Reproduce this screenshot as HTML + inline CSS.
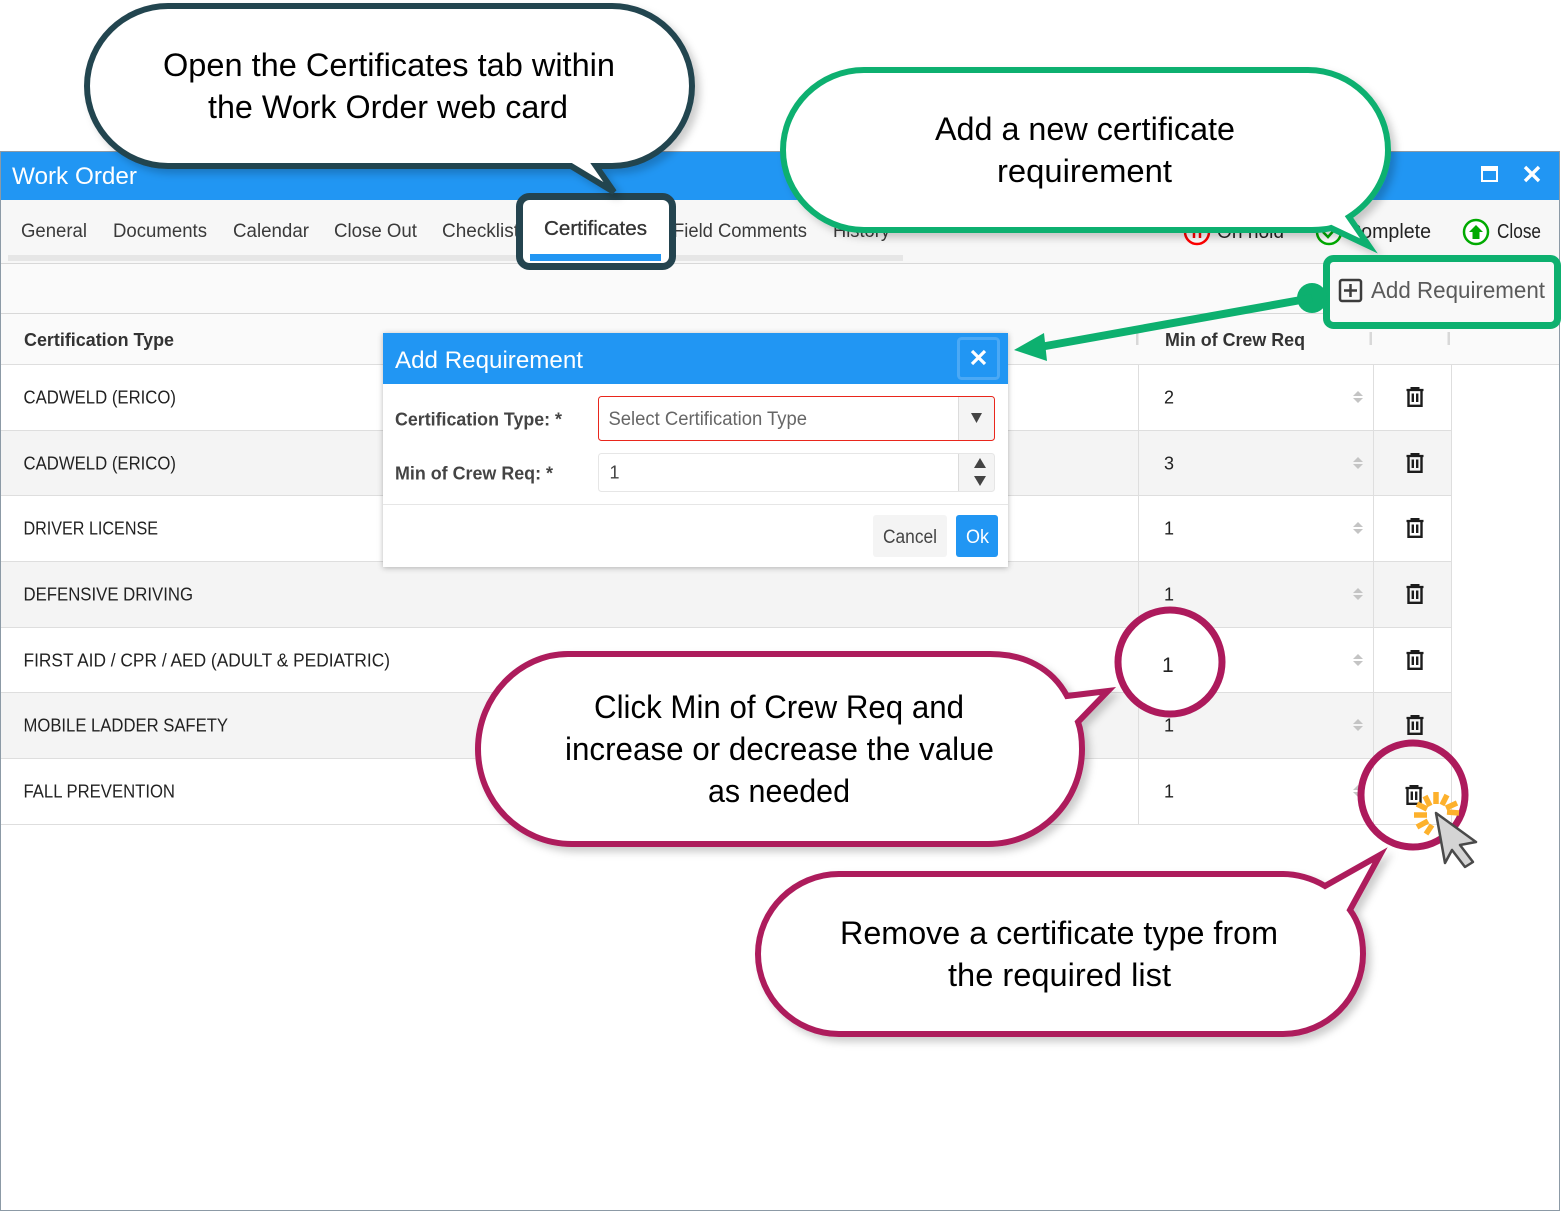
<!DOCTYPE html>
<html lang="en"><head><meta charset="utf-8"><title>Work Order</title>
<style>
html,body{margin:0;padding:0;background:#fff}
svg{display:block}
text{font-family:"Liberation Sans",sans-serif;fill:#333}
.cap{font-size:32px;fill:#000}
.tab{font-size:19px;fill:#3a3a3a}
.row{font-size:18px;fill:#222}
.h{font-size:18px;font-weight:bold;fill:#333}
.l{font-size:18px;font-weight:bold;fill:#444}
</style></head><body>
<svg width="1561" height="1211" viewBox="0 0 1561 1211" xmlns="http://www.w3.org/2000/svg">
<defs>
<filter id="sh" x="-10%" y="-10%" width="125%" height="130%"><feDropShadow dx="5" dy="5" stdDeviation="4" flood-color="#000" flood-opacity="0.2"/></filter>
<filter id="ms" x="-5%" y="-5%" width="110%" height="110%"><feDropShadow dx="0" dy="1" stdDeviation="3" flood-color="#000" flood-opacity="0.28"/></filter>
<g id="tr" fill="none" stroke="#1c1c1c">
<path d="M-8.500-7H8.500" stroke-width="2.200"/>
<path d="M-3.500-7V-9H3.500V-7" stroke-width="2"/>
<path d="M-6.500-7V8.800H6.500V-7" stroke-width="2.400"/>
<path d="M-2.200-3.500V5M2.200-3.500V5" stroke-width="2.400"/>
</g>
<g id="sp" fill="#c4c4c4"><path d="M-5-1L0-6L5-1Z"/><path d="M-5 1L0 6L5 1Z"/></g>
</defs>

<rect x="0.500" y="151.500" width="1559" height="1059" fill="#fff" stroke="#8c9aa6"/>
<rect x="1" y="152" width="1558" height="48" fill="#2196f3"/>
<text x="12" y="184" font-size="24" style="fill:#fff" textLength="125" lengthAdjust="spacingAndGlyphs">Work Order</text>
<rect x="1482" y="167" width="15" height="14" fill="none" stroke="#fff" stroke-width="2"/><rect x="1482" y="167" width="15" height="4" fill="#fff"/>
<path d="M1525 167L1539 181M1539 167L1525 181" stroke="#fff" stroke-width="3.400"/>

<rect x="1" y="200" width="1558" height="63" fill="#f7f7f7"/>
<rect x="8" y="255" width="895" height="6" fill="#e6e6e6"/>
<rect x="1" y="263" width="1558" height="1" fill="#d8d8d8"/>
<rect x="1" y="264" width="1558" height="49" fill="#fafafa"/>
<rect x="1" y="313" width="1558" height="1" fill="#d8d8d8"/>
<rect x="1" y="314" width="1558" height="50" fill="#fafafa"/>

<text class="tab" x="21" y="237" textLength="66" lengthAdjust="spacingAndGlyphs">General</text>
<text class="tab" x="113" y="237" textLength="94" lengthAdjust="spacingAndGlyphs">Documents</text>
<text class="tab" x="233" y="237" textLength="76" lengthAdjust="spacingAndGlyphs">Calendar</text>
<text class="tab" x="334" y="237" textLength="83" lengthAdjust="spacingAndGlyphs">Close Out</text>
<text class="tab" x="442" y="237" textLength="77" lengthAdjust="spacingAndGlyphs">Checklist</text>
<text class="tab" x="673" y="237" textLength="134" lengthAdjust="spacingAndGlyphs">Field Comments</text>
<text class="tab" x="833" y="237" textLength="57" lengthAdjust="spacingAndGlyphs">History</text>

<circle cx="1197" cy="232" r="12" fill="#fff" stroke="#f00" stroke-width="2.500"/><path d="M1194 226V238M1200 226V238" stroke="#f00" stroke-width="2.500"/>
<text x="1217" y="238" font-size="20" style="fill:#222" textLength="67" lengthAdjust="spacingAndGlyphs">On hold</text>
<circle cx="1329" cy="232" r="12" fill="#fff" stroke="#0a0" stroke-width="2.500"/><path d="M1323 232L1328 237L1336 228" fill="none" stroke="#0a0" stroke-width="2.500"/>
<text x="1347" y="238" font-size="20" style="fill:#222" textLength="84" lengthAdjust="spacingAndGlyphs">Complete</text>
<circle cx="1476" cy="232" r="12" fill="#fff" stroke="#0a0" stroke-width="2.500"/><path d="M1476 225L1483 232H1479.500V239H1472.500V232H1469Z" fill="#0a0"/>
<text x="1497" y="238" font-size="20" style="fill:#222" textLength="44" lengthAdjust="spacingAndGlyphs">Close</text>

<text class="h" x="24" y="346" textLength="150" lengthAdjust="spacingAndGlyphs">Certification Type</text>
<text class="h" x="1165" y="346" textLength="140" lengthAdjust="spacingAndGlyphs">Min of Crew Req</text>
<rect x="1136" y="332" width="2.500" height="13" fill="#d8d8d8"/><rect x="1369.500" y="332" width="2.500" height="13" fill="#d8d8d8"/><rect x="1447.500" y="332" width="2.500" height="13" fill="#d8d8d8"/>

<rect x="1" y="364" width="1450" height="461" fill="#fff"/>
<rect x="1" y="431" width="1450" height="65" fill="#f4f4f4"/>
<rect x="1" y="562" width="1450" height="66" fill="#f4f4f4"/>
<rect x="1" y="693" width="1450" height="66" fill="#f4f4f4"/>
<g fill="#dedede">
<rect x="1" y="364" width="1558" height="1"/><rect x="1" y="430" width="1450" height="1"/><rect x="1" y="495" width="1450" height="1"/><rect x="1" y="561" width="1450" height="1"/><rect x="1" y="627" width="1450" height="1"/><rect x="1" y="692" width="1450" height="1"/><rect x="1" y="758" width="1450" height="1"/><rect x="1" y="824" width="1450" height="1"/>
<rect x="1138" y="365" width="1" height="460"/><rect x="1373" y="365" width="1" height="460"/><rect x="1451" y="365" width="1" height="460"/>
</g>

<text class="row" x="23.500" y="403.500" textLength="152.500" lengthAdjust="spacingAndGlyphs">CADWELD (ERICO)</text>
<text class="row" x="23.500" y="469.500" textLength="152.500" lengthAdjust="spacingAndGlyphs">CADWELD (ERICO)</text>
<text class="row" x="23.500" y="534.500" textLength="134.500" lengthAdjust="spacingAndGlyphs">DRIVER LICENSE</text>
<text class="row" x="23.500" y="600.500" textLength="169.500" lengthAdjust="spacingAndGlyphs">DEFENSIVE DRIVING</text>
<text class="row" x="23.500" y="666.500" textLength="366.500" lengthAdjust="spacingAndGlyphs">FIRST AID / CPR / AED (ADULT &amp; PEDIATRIC)</text>
<text class="row" x="23.500" y="731.500" textLength="204.500" lengthAdjust="spacingAndGlyphs">MOBILE LADDER SAFETY</text>
<text class="row" x="23.500" y="797.500" textLength="151.500" lengthAdjust="spacingAndGlyphs">FALL PREVENTION</text>
<text class="row" x="1164" y="403.500">2</text><text class="row" x="1164" y="469.500">3</text><text class="row" x="1164" y="534.500">1</text><text class="row" x="1164" y="600.500">1</text><text class="row" x="1164" y="731.500">1</text><text class="row" x="1164" y="797.500">1</text>
<use href="#sp" transform="translate(1358 397)"/><use href="#sp" transform="translate(1358 463)"/><use href="#sp" transform="translate(1358 528)"/><use href="#sp" transform="translate(1358 594)"/><use href="#sp" transform="translate(1358 660)"/><use href="#sp" transform="translate(1358 725)"/><use href="#sp" transform="translate(1358 791)"/>
<use href="#tr" transform="translate(1415 397)"/><use href="#tr" transform="translate(1415 463)"/><use href="#tr" transform="translate(1415 528)"/><use href="#tr" transform="translate(1415 594)"/><use href="#tr" transform="translate(1415 660)"/><use href="#tr" transform="translate(1415 725)"/><use href="#tr" transform="translate(1414 795)"/>

<rect x="383" y="333" width="625" height="234" fill="#fff" filter="url(#ms)"/>
<rect x="383" y="333" width="625" height="51" fill="#2196f3"/>
<text x="395" y="368" font-size="24" style="fill:#fff" textLength="188" lengthAdjust="spacingAndGlyphs">Add Requirement</text>
<rect x="958.500" y="338.500" width="40" height="40" rx="3" fill="none" stroke="#4ba9f5" stroke-width="3"/>
<path d="M972 351L985 364M985 351L972 364" stroke="#fff" stroke-width="3.200"/>
<text class="l" x="395" y="425.500" textLength="167" lengthAdjust="spacingAndGlyphs">Certification Type: *</text>
<text class="l" x="395" y="479.500" textLength="158" lengthAdjust="spacingAndGlyphs">Min of Crew Req: *</text>
<rect x="958" y="397" width="36" height="43" fill="#f4f4f4"/>
<rect x="958" y="397" width="1" height="43" fill="#dcdcdc"/>
<rect x="598.500" y="396.500" width="396" height="44" rx="3" fill="none" stroke="#e9261c"/>
<text x="608.500" y="425" font-size="19" style="fill:#666" textLength="198.500" lengthAdjust="spacingAndGlyphs">Select Certification Type</text>
<path d="M971 413H982L976.500 423Z" fill="#444"/>
<rect x="958" y="454" width="36" height="37" fill="#f4f4f4"/>
<rect x="958" y="454" width="1" height="37" fill="#dcdcdc"/>
<rect x="598.500" y="453.500" width="396" height="38" rx="3" fill="none" stroke="#e6e6e6"/>
<text x="609.500" y="478.500" font-size="18" style="fill:#444">1</text>
<path d="M974 468H986L980 458Z" fill="#444"/><path d="M974 476H986L980 486Z" fill="#444"/>
<rect x="383" y="504" width="625" height="1" fill="#e6e6e6"/>
<rect x="873" y="515" width="74" height="42" rx="3" fill="#f4f4f4"/>
<text x="883" y="543" font-size="19" style="fill:#444" textLength="54" lengthAdjust="spacingAndGlyphs">Cancel</text>
<rect x="956" y="515" width="42" height="42" rx="3" fill="#2196f3"/>
<text x="966" y="543" font-size="19" style="fill:#fff" textLength="23" lengthAdjust="spacingAndGlyphs">Ok</text>

<rect x="519.500" y="196.500" width="153" height="70" rx="10" fill="#fff" stroke="#24444f" stroke-width="7"/>
<rect x="530" y="254" width="131" height="7" fill="#2196f3"/>
<text x="544" y="235" font-size="20" style="fill:#333;stroke:#333;stroke-width:.3" textLength="103" lengthAdjust="spacingAndGlyphs">Certificates</text>

<path d="M168 6H612C656 6 692 42 692 86C692 130 656 166 612 166H596L614 192L571 166H168C124 166 87 130 87 86C87 42 124 6 168 6Z" fill="#fff" stroke="#24444f" stroke-width="6" filter="url(#sh)"/>
<text class="cap" x="163" y="76" textLength="452" lengthAdjust="spacingAndGlyphs">Open the Certificates tab within</text>
<text class="cap" x="208" y="118" textLength="360" lengthAdjust="spacingAndGlyphs">the Work Order web card</text>

<path d="M864 70H1308C1352 70 1388 106 1388 150C1388 178 1372 202 1349 217L1369 246L1331 228C1324 230 1316 230 1308 230H864C820 230 783 194 783 150C783 106 820 70 864 70Z" fill="#fff" stroke="#0db06f" stroke-width="6" filter="url(#sh)"/>
<text class="cap" x="935" y="140" textLength="300" lengthAdjust="spacingAndGlyphs">Add a new certificate</text>
<text class="cap" x="997" y="182" textLength="175" lengthAdjust="spacingAndGlyphs">requirement</text>

<rect x="1326.500" y="258.500" width="231" height="67" rx="7" fill="#f9f9f9" stroke="#0db06f" stroke-width="7"/>
<rect x="1340" y="280" width="21" height="21" rx="2" fill="none" stroke="#3c3c3c" stroke-width="2.500"/>
<path d="M1344 290.500H1357M1350.500 284V297" stroke="#3c3c3c" stroke-width="2.500"/>
<text x="1371" y="298" font-size="23" style="fill:#5a5a5a" textLength="174" lengthAdjust="spacingAndGlyphs">Add Requirement</text>
<circle cx="1312" cy="298" r="15" fill="#0db06f"/>
<path d="M1312 298L1040 347" stroke="#0db06f" stroke-width="8"/>
<path d="M1014 350L1044 333L1047 361Z" fill="#0db06f"/>

<circle cx="1170" cy="662" r="52" fill="#fff" stroke="#ad1a5c" stroke-width="7"/>
<text x="1162" y="672" font-size="21" style="fill:#222">1</text>
<path d="M568 654H990C1024 654 1052 668 1067 696L1108 691L1078 722C1081 730 1082 740 1082 749C1082 802 1040 844 988 844H572C520 844 478 802 478 749C478 696 520 654 568 654Z" fill="#fff" stroke="#ad1a5c" stroke-width="6" filter="url(#sh)"/>
<text class="cap" x="594" y="718" textLength="370" lengthAdjust="spacingAndGlyphs">Click Min of Crew Req and</text>
<text class="cap" x="565" y="760" textLength="429" lengthAdjust="spacingAndGlyphs">increase or decrease the value</text>
<text class="cap" x="708" y="802" textLength="142" lengthAdjust="spacingAndGlyphs">as needed</text>

<path d="M839 874H1283C1296 874 1312 878 1325 886L1380 855L1350 910C1359 922 1363 938 1363 954C1363 998 1327 1034 1283 1034H839C795 1034 758 998 758 954C758 910 795 874 839 874Z" fill="#fff" stroke="#ad1a5c" stroke-width="6" filter="url(#sh)"/>
<text class="cap" x="840" y="944" textLength="438" lengthAdjust="spacingAndGlyphs">Remove a certificate type from</text>
<text class="cap" x="948" y="986" textLength="223" lengthAdjust="spacingAndGlyphs">the required list</text>

<circle cx="1413" cy="795" r="52" fill="none" stroke="#ad1a5c" stroke-width="7"/>
<g stroke="#fdb12c" stroke-width="5.500">
<path d="M1436 792V804M1447 795L1442 805M1457 803L1446 808M1459 813L1447 812M1425 796L1430 806M1417 804L1427 809M1414 815H1427M1417 827L1428 821M1426 834L1432 825"/>
</g>
<path d="M1436 813L1476 842L1460 845L1473 862L1465 867L1452 850L1445 863Z" fill="#d4d4d4" stroke="#4a4a4a" stroke-width="2.500" stroke-linejoin="round"/>
</svg>
</body></html>
